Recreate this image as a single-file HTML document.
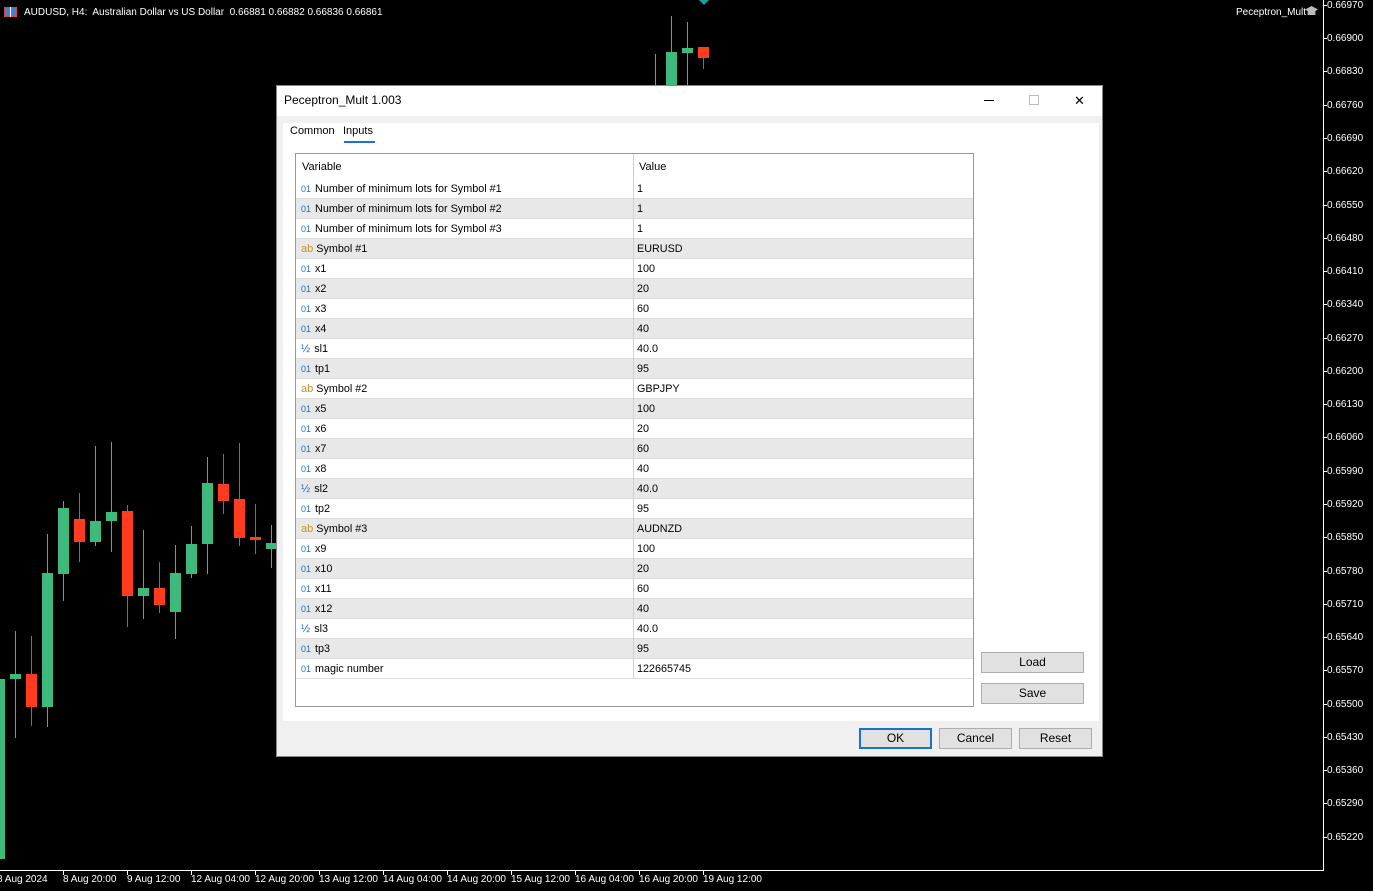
<!DOCTYPE html>
<html><head><meta charset="utf-8">
<style>
*{margin:0;padding:0;box-sizing:border-box}
body{width:1373px;height:891px;background:#000;position:relative;overflow:hidden;font-family:"Liberation Sans",sans-serif;}
.a{position:absolute}
.ax{color:#fff;font-size:10px;position:absolute;left:1327px;line-height:10px}
.tk{position:absolute;left:1323px;width:4px;height:1px;background:#fff}
.tl{color:#fff;font-size:10px;position:absolute;top:874px;line-height:11px;white-space:nowrap}
.vt{position:absolute;top:870px;width:1px;height:5px;background:#fff}
.g{background:#3dba7c}
.r{background:#ff3c1e}
.btn{position:absolute;background:#e1e1e1;border:1px solid #adadad;font-size:12px;text-align:center;line-height:18px;color:#000}
.row{position:absolute;left:0;width:677px;height:20px;font-size:10.8px;line-height:20px;color:#000;border-bottom:1px solid #dcdcdc}
.row.s{background:#e8e8e8}
.row .n{position:absolute;left:5px;white-space:nowrap}
.row .v{position:absolute;left:341px}
.row .d{position:absolute;left:337px;top:0;width:1px;height:20px;background:#d0d0d0}
.i1{color:#1e6fb8;font-size:9px;margin-right:4px}
.ia{color:#c8932c;font-size:11px;margin-right:3px}
.ih{color:#1e6fb8;font-size:11px;margin-right:4px}
</style></head><body>

<div class="a" style="left:4px;top:7px;width:13px;height:10px;border:1px solid #d44;background:#4a7fd0"></div>
<div class="a" style="left:10px;top:7px;width:1px;height:10px;background:#fff"></div>
<div class="a" style="left:24px;top:7px;color:#fff;font-size:10px;white-space:nowrap">AUDUSD, H4:&nbsp; Australian Dollar vs US Dollar&nbsp; 0.66881 0.66882 0.66836 0.66861</div>
<div class="a" style="left:1236px;top:7px;color:#fff;font-size:10px">Peceptron_Mult</div>
<div class="a" style="left:1305px;top:6px;width:13px;height:10px;background:#bbb;clip-path:polygon(0 35%,50% 0,100% 35%,80% 50%,80% 90%,20% 90%,20% 50%)"></div>

<div class="a" style="left:1323px;top:0;width:1px;height:871px;background:#fff"></div>
<div class="a" style="left:0;top:870px;width:1324px;height:1px;background:#fff"></div>

<div class="a g" style="left:0;top:679px;width:5px;height:180px"></div>
<div class="a g" style="left:15px;top:631px;width:1px;height:107px"></div><div class="a g" style="left:10px;top:674px;width:11px;height:5px"></div>
<div class="a r" style="left:31px;top:636px;width:1px;height:90px"></div><div class="a r" style="left:26px;top:674px;width:11px;height:33px"></div>
<div class="a g" style="left:47px;top:534px;width:1px;height:193px"></div><div class="a g" style="left:42px;top:573px;width:11px;height:134px"></div>
<div class="a g" style="left:63px;top:501px;width:1px;height:100px"></div><div class="a g" style="left:58px;top:508px;width:11px;height:66px"></div>
<div class="a r" style="left:79px;top:493px;width:1px;height:69px"></div><div class="a r" style="left:74px;top:519px;width:11px;height:23px"></div>
<div class="a g" style="left:95px;top:446px;width:1px;height:100px"></div><div class="a g" style="left:90px;top:521px;width:11px;height:21px"></div>
<div class="a g" style="left:111px;top:442px;width:1px;height:110px"></div><div class="a g" style="left:106px;top:512px;width:11px;height:9px"></div>
<div class="a r" style="left:127px;top:505px;width:1px;height:122px"></div><div class="a r" style="left:122px;top:511px;width:11px;height:85px"></div>
<div class="a g" style="left:143px;top:530px;width:1px;height:89px"></div><div class="a g" style="left:138px;top:588px;width:11px;height:8px"></div>
<div class="a r" style="left:159px;top:562px;width:1px;height:51px"></div><div class="a r" style="left:154px;top:588px;width:11px;height:17px"></div>
<div class="a g" style="left:175px;top:545px;width:1px;height:94px"></div><div class="a g" style="left:170px;top:573px;width:11px;height:39px"></div>
<div class="a g" style="left:191px;top:526px;width:1px;height:52px"></div><div class="a g" style="left:186px;top:544px;width:11px;height:30px"></div>
<div class="a g" style="left:207px;top:457px;width:1px;height:117px"></div><div class="a g" style="left:202px;top:483px;width:11px;height:61px"></div>
<div class="a r" style="left:223px;top:454px;width:1px;height:60px"></div><div class="a r" style="left:218px;top:484px;width:11px;height:17px"></div>
<div class="a r" style="left:239px;top:443px;width:1px;height:103px"></div><div class="a r" style="left:234px;top:499px;width:11px;height:39px"></div>
<div class="a r" style="left:255px;top:504px;width:1px;height:50px"></div><div class="a r" style="left:250px;top:537px;width:11px;height:3px"></div>
<div class="a g" style="left:271px;top:525px;width:1px;height:43px"></div><div class="a g" style="left:266px;top:543px;width:10px;height:6px"></div>
<div class="a g" style="left:655px;top:54px;width:1px;height:31px"></div>
<div class="a g" style="left:671px;top:16px;width:1px;height:69px"></div><div class="a g" style="left:666px;top:52px;width:11px;height:33px"></div>
<div class="a g" style="left:687px;top:22px;width:1px;height:63px"></div><div class="a g" style="left:682px;top:48px;width:11px;height:5px"></div>
<div class="a r" style="left:703px;top:57px;width:1px;height:12px"></div><div class="a r" style="left:698px;top:47px;width:11px;height:11px"></div>
<div class="a" style="left:699px;top:0;width:0;height:0;border-left:5px solid transparent;border-right:5px solid transparent;border-top:5px solid #1aa0a0"></div>

<div class="tk" style="top:5px"></div><div class="ax" style="top:1px">0.66970</div>
<div class="tk" style="top:38px"></div><div class="ax" style="top:34px">0.66900</div>
<div class="tk" style="top:71px"></div><div class="ax" style="top:67px">0.66830</div>
<div class="tk" style="top:105px"></div><div class="ax" style="top:101px">0.66760</div>
<div class="tk" style="top:138px"></div><div class="ax" style="top:134px">0.66690</div>
<div class="tk" style="top:171px"></div><div class="ax" style="top:167px">0.66620</div>
<div class="tk" style="top:205px"></div><div class="ax" style="top:201px">0.66550</div>
<div class="tk" style="top:238px"></div><div class="ax" style="top:234px">0.66480</div>
<div class="tk" style="top:271px"></div><div class="ax" style="top:267px">0.66410</div>
<div class="tk" style="top:304px"></div><div class="ax" style="top:300px">0.66340</div>
<div class="tk" style="top:338px"></div><div class="ax" style="top:334px">0.66270</div>
<div class="tk" style="top:371px"></div><div class="ax" style="top:367px">0.66200</div>
<div class="tk" style="top:404px"></div><div class="ax" style="top:400px">0.66130</div>
<div class="tk" style="top:437px"></div><div class="ax" style="top:433px">0.66060</div>
<div class="tk" style="top:471px"></div><div class="ax" style="top:467px">0.65990</div>
<div class="tk" style="top:504px"></div><div class="ax" style="top:500px">0.65920</div>
<div class="tk" style="top:537px"></div><div class="ax" style="top:533px">0.65850</div>
<div class="tk" style="top:571px"></div><div class="ax" style="top:567px">0.65780</div>
<div class="tk" style="top:604px"></div><div class="ax" style="top:600px">0.65710</div>
<div class="tk" style="top:637px"></div><div class="ax" style="top:633px">0.65640</div>
<div class="tk" style="top:670px"></div><div class="ax" style="top:666px">0.65570</div>
<div class="tk" style="top:704px"></div><div class="ax" style="top:700px">0.65500</div>
<div class="tk" style="top:737px"></div><div class="ax" style="top:733px">0.65430</div>
<div class="tk" style="top:770px"></div><div class="ax" style="top:766px">0.65360</div>
<div class="tk" style="top:803px"></div><div class="ax" style="top:799px">0.65290</div>
<div class="tk" style="top:837px"></div><div class="ax" style="top:833px">0.65220</div>

<div class="tl" style="left:-3px">8 Aug 2024</div>
<div class="vt" style="left:63px"></div><div class="tl" style="left:63px">8 Aug 20:00</div>
<div class="vt" style="left:127px"></div><div class="tl" style="left:127px">9 Aug 12:00</div>
<div class="vt" style="left:191px"></div><div class="tl" style="left:191px">12 Aug 04:00</div>
<div class="vt" style="left:255px"></div><div class="tl" style="left:255px">12 Aug 20:00</div>
<div class="vt" style="left:319px"></div><div class="tl" style="left:319px">13 Aug 12:00</div>
<div class="vt" style="left:383px"></div><div class="tl" style="left:383px">14 Aug 04:00</div>
<div class="vt" style="left:447px"></div><div class="tl" style="left:447px">14 Aug 20:00</div>
<div class="vt" style="left:511px"></div><div class="tl" style="left:511px">15 Aug 12:00</div>
<div class="vt" style="left:575px"></div><div class="tl" style="left:575px">16 Aug 04:00</div>
<div class="vt" style="left:639px"></div><div class="tl" style="left:639px">16 Aug 20:00</div>
<div class="vt" style="left:703px"></div><div class="tl" style="left:703px">19 Aug 12:00</div>

<div class="a" style="left:276px;top:85px;width:827px;height:672px;background:#f0f0f0;border:1px solid #888">
  <div class="a" style="left:0;top:0;width:825px;height:30px;background:#fff"></div>
  <div class="a" style="left:7px;top:7px;font-size:12px;color:#000">Peceptron_Mult 1.003</div>
  <div class="a" style="left:707px;top:14px;width:10px;height:1px;background:#000"></div>
  <div class="a" style="left:752px;top:9px;width:10px;height:10px;border:1px solid #bbb"></div>
  <div class="a" style="left:797px;top:8px;font-size:13px;line-height:13px;color:#000">✕</div>

  <div class="a" style="left:6px;top:37px;width:816px;height:598px;background:#fff"></div>
  <div class="a" style="left:13px;top:39px;font-size:11px;color:#000">Common</div>
  <div class="a" style="left:66px;top:39px;font-size:11px;color:#000">Inputs</div>
  <div class="a" style="left:67px;top:55px;width:31px;height:2px;background:#1a73c8"></div>

  <div class="a" style="left:18px;top:67px;width:679px;height:554px;border:1px solid #999;background:#fff;overflow:hidden">
    <div class="a" style="left:0;top:0;width:677px;height:25px;font-size:11px;line-height:26px">
      <span class="a" style="left:6px">Variable</span>
      <span class="a" style="left:343px">Value</span>
      <div class="a" style="left:337px;top:0;width:1px;height:25px;background:#ccc"></div>
    </div>
    <div class="row" style="top:25px"><span class="n"><span class="i1">01</span>Number of minimum lots for Symbol #1</span><div class="d"></div><span class="v">1</span></div>
    <div class="row s" style="top:45px"><span class="n"><span class="i1">01</span>Number of minimum lots for Symbol #2</span><div class="d"></div><span class="v">1</span></div>
    <div class="row" style="top:65px"><span class="n"><span class="i1">01</span>Number of minimum lots for Symbol #3</span><div class="d"></div><span class="v">1</span></div>
    <div class="row s" style="top:85px"><span class="n"><span class="ia">ab</span>Symbol #1</span><div class="d"></div><span class="v">EURUSD</span></div>
    <div class="row" style="top:105px"><span class="n"><span class="i1">01</span>x1</span><div class="d"></div><span class="v">100</span></div>
    <div class="row s" style="top:125px"><span class="n"><span class="i1">01</span>x2</span><div class="d"></div><span class="v">20</span></div>
    <div class="row" style="top:145px"><span class="n"><span class="i1">01</span>x3</span><div class="d"></div><span class="v">60</span></div>
    <div class="row s" style="top:165px"><span class="n"><span class="i1">01</span>x4</span><div class="d"></div><span class="v">40</span></div>
    <div class="row" style="top:185px"><span class="n"><span class="ih">½</span>sl1</span><div class="d"></div><span class="v">40.0</span></div>
    <div class="row s" style="top:205px"><span class="n"><span class="i1">01</span>tp1</span><div class="d"></div><span class="v">95</span></div>
    <div class="row" style="top:225px"><span class="n"><span class="ia">ab</span>Symbol #2</span><div class="d"></div><span class="v">GBPJPY</span></div>
    <div class="row s" style="top:245px"><span class="n"><span class="i1">01</span>x5</span><div class="d"></div><span class="v">100</span></div>
    <div class="row" style="top:265px"><span class="n"><span class="i1">01</span>x6</span><div class="d"></div><span class="v">20</span></div>
    <div class="row s" style="top:285px"><span class="n"><span class="i1">01</span>x7</span><div class="d"></div><span class="v">60</span></div>
    <div class="row" style="top:305px"><span class="n"><span class="i1">01</span>x8</span><div class="d"></div><span class="v">40</span></div>
    <div class="row s" style="top:325px"><span class="n"><span class="ih">½</span>sl2</span><div class="d"></div><span class="v">40.0</span></div>
    <div class="row" style="top:345px"><span class="n"><span class="i1">01</span>tp2</span><div class="d"></div><span class="v">95</span></div>
    <div class="row s" style="top:365px"><span class="n"><span class="ia">ab</span>Symbol #3</span><div class="d"></div><span class="v">AUDNZD</span></div>
    <div class="row" style="top:385px"><span class="n"><span class="i1">01</span>x9</span><div class="d"></div><span class="v">100</span></div>
    <div class="row s" style="top:405px"><span class="n"><span class="i1">01</span>x10</span><div class="d"></div><span class="v">20</span></div>
    <div class="row" style="top:425px"><span class="n"><span class="i1">01</span>x11</span><div class="d"></div><span class="v">60</span></div>
    <div class="row s" style="top:445px"><span class="n"><span class="i1">01</span>x12</span><div class="d"></div><span class="v">40</span></div>
    <div class="row" style="top:465px"><span class="n"><span class="ih">½</span>sl3</span><div class="d"></div><span class="v">40.0</span></div>
    <div class="row s" style="top:485px"><span class="n"><span class="i1">01</span>tp3</span><div class="d"></div><span class="v">95</span></div>
    <div class="row" style="top:505px"><span class="n"><span class="i1">01</span>magic number</span><div class="d"></div><span class="v">122665745</span></div>
  </div>

  <div class="btn" style="left:704px;top:566px;width:103px;height:21px">Load</div>
  <div class="btn" style="left:704px;top:597px;width:103px;height:21px">Save</div>
  <div class="btn" style="left:582px;top:642px;width:73px;height:21px;border:2px solid #1a73c8;line-height:17px">OK</div>
  <div class="btn" style="left:662px;top:642px;width:73px;height:21px">Cancel</div>
  <div class="btn" style="left:742px;top:642px;width:73px;height:21px">Reset</div>
</div>
</body></html>
